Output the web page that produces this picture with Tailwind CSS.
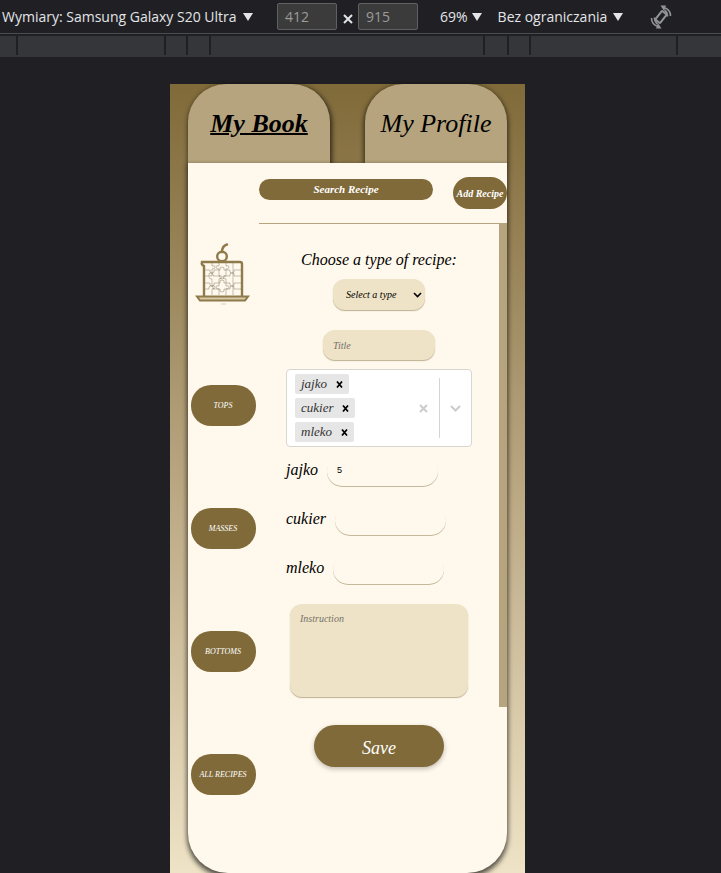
<!DOCTYPE html>
<html lang="pl">
<head>
<meta charset="utf-8">
<meta name="viewport" content="width=device-width, initial-scale=1">
<title>My Book</title>
<script src="https://cdn.jsdelivr.net/npm/@tailwindcss/browser@4"></script>
</head>
<body class="flex min-h-screen flex-col overflow-x-hidden bg-[#202024] font-['Liberation_Serif',serif] text-black">
  <!-- Device toolbar -->
  <header class="font-['Open_Sans',sans-serif] text-sm text-[#e4e5e8]">
    <div class="flex h-[34px] items-center whitespace-nowrap border-b border-[#494c50] pl-[2px]">
      <button class="flex w-[275px] items-center gap-[6px]">Wymiary: Samsung Galaxy S20 Ultra
        <svg class="h-2 w-[10px] fill-current" viewBox="0 0 10 8"><path d="M0 0h10L5 8z"/></svg></button>
      <input aria-label="Szerokość" value="412" class="h-[27px] w-[60px] rounded-xs border border-[#5f6062] bg-[#3b3b3b] px-[7px] text-[#9b9b9b]">
      <span class="flex w-[21px] justify-center pt-1"><svg class="h-[10px] w-[10px]" viewBox="0 0 10 10" fill="none" stroke="currentColor" stroke-width="2"><path d="M1 1l8 8M9 1L1 9"/></svg></span>
      <input aria-label="Wysokość" value="915" class="h-[27px] w-[60px] rounded-xs border border-[#5f6062] bg-[#3b3b3b] px-[7px] text-[#9b9b9b]">
      <button class="ml-[22px] flex items-center gap-1">69%
        <svg class="h-2 w-[10px] fill-current" viewBox="0 0 10 8"><path d="M0 0h10L5 8z"/></svg></button>
      <button class="ml-4 flex items-center gap-[6px]">Bez ograniczania
        <svg class="h-2 w-[10px] fill-current" viewBox="0 0 10 8"><path d="M0 0h10L5 8z"/></svg></button>
      <button aria-label="Obróć" class="ml-[26px]">
        <svg class="h-6 w-6" viewBox="0 0 24 24" fill="none" stroke="#929396" stroke-width="2"><rect x="9" y="6.500" width="6" height="11" rx="1" transform="rotate(38 12 12)"/><path d="M2.500 13c0 4 2.500 7.500 7 8.500M21.500 11c0-4-2.500-7.500-7-8.500M5.500 12.500c0 3 1 5 3 6.500M18.500 11.500c0-3-1-5-3-6.500" stroke-width="1.600"/><path d="M7 23.500h5.500L9 18zM17 0.500h-5.500L15 6z" fill="#929396" stroke="none"/></svg></button>
    </div>
    <div class="relative mt-[2px] h-[21px] bg-[#35363a]">
      <i class="absolute left-[16px] top-0 h-[19px] w-[2px] bg-[#202024]"></i>
      <i class="absolute left-[164px] top-0 h-[19px] w-[2px] bg-[#202024]"></i>
      <i class="absolute left-[186px] top-0 h-[19px] w-[2px] bg-[#202024]"></i>
      <i class="absolute left-[209px] top-0 h-[19px] w-[2px] bg-[#202024]"></i>
      <i class="absolute left-[483px] top-0 h-[19px] w-[2px] bg-[#202024]"></i>
      <i class="absolute left-[507px] top-0 h-[19px] w-[2px] bg-[#202024]"></i>
      <i class="absolute left-[529px] top-0 h-[19px] w-[2px] bg-[#202024]"></i>
      <i class="absolute left-[676px] top-0 h-[19px] w-[2px] bg-[#202024]"></i>
    </div>
  </header>

  <!-- Device viewport -->
  <div class="flex grow justify-center pr-[26px] pt-[27px]">
    <div class="flex w-full max-w-[355px] flex-col bg-linear-to-b from-[#806a39] via-[#b9a681] to-[#eee3c6] px-[18px]">
      <nav class="flex justify-between text-[26px] italic">
        <a href="#book" class="flex h-[79px] w-[142px] items-center justify-center rounded-t-[38px] bg-[#b6a47e] font-bold underline decoration-2 shadow-[1px_2px_5px_1px_rgba(0,0,0,0.65)]">My Book</a>
        <a href="#profile" class="flex h-[79px] w-[142px] items-center justify-center rounded-t-[38px] bg-[#b6a47e] shadow-[0_2px_5px_1px_rgba(0,0,0,0.65)]">My Profile</a>
      </nav>

      <main class="relative flex grow rounded-b-[40px] bg-[#fff8ec] shadow-[0_3px_5px_1px_rgba(0,0,0,0.65)]">
        <aside class="flex w-[71px] shrink-0 flex-col items-center pr-[1px] text-[8px] font-medium italic text-white">
          <svg class="mt-[79px] h-[64px] w-[56px]" viewBox="0 0 56 64" fill="none" stroke="#8f7a4a" stroke-width="2.400" role="img" aria-label="Cake">
            <circle cx="27" cy="14.500" r="4.800"/><path d="M27 10Q27 4 32 2.500" stroke-linecap="round"/>
            <path d="M9 54V24q-3-1-2-4h38q2 0 2 2v32"/><path d="M2 54.500h51l-3 4H5z" fill="#d9cba6" stroke-width="2"/>
            <path d="M26 62h5" stroke="#d9cfb8" stroke-width="1"/>
            <g stroke="#756a52" stroke-width="0.700" stroke-opacity="0.6">
              <path d="M10 28h5q-1 3 2 3t2-3h6q-1-3 2-3t2 3h6q-1 3 2 3t2-3h7M10 34h4q-1-3 2-3t2 3h7q-1 3 2 3t2-3h6q-1-3 2-3t2 3h7M10 41h5q-1 3 2 3t2-3h6q-1-3 2-3t2 3h6q-1 3 2 3t2-3h7M10 47h4q-1-3 2-3t2 3h7q-1 3 2 3t2-3h6q-1-3 2-3t2 3h7"/>
              <path d="M17 21v3q3-1 3 1t-3 2v7q-3-1-3 1t3 2v7q3-1 3 1t-3 2v6M24 21v3q-3-1-3 1t3 2v7q3-1 3 1t-3 2v7q-3-1-3 1t3 2v6M31 21v3q3-1 3 1t-3 2v7q-3-1-3 1t3 2v7q3-1 3 1t-3 2v6M38 21v32"/>
            </g>
          </svg>
          <div class="mt-[79px] flex flex-col gap-[82px]">
            <button class="h-[41px] w-[65px] rounded-[20px] bg-[#806a39]">TOPS</button>
            <button class="h-[41px] w-[65px] rounded-[20px] bg-[#806a39]">MASSES</button>
            <button class="h-[41px] w-[65px] rounded-[20px] bg-[#806a39]">BOTTOMS</button>
            <button class="h-[41px] w-[65px] whitespace-nowrap rounded-[20px] bg-[#806a39]">ALL RECIPES</button>
          </div>
        </aside>

        <section class="min-w-0 grow">
          <div class="flex h-[61px] items-start justify-between border-b border-[#b6a47e] pt-[14px] font-bold italic text-white">
            <button class="mt-[2px] h-[21px] w-[174px] rounded-full bg-[#806a39] text-[11px] leading-none">Search Recipe</button>
            <button class="h-8 w-[54px] whitespace-nowrap rounded-full bg-[#806a39] text-[10px]">Add Recipe</button>
          </div>
          <div class="flex">
            <form class="flex grow flex-col items-center pt-[26px] italic">
              <label for="type" class="text-base leading-5">Choose a type of recipe:</label>
              <div class="relative mt-[9px]">
                <select id="type" class="block h-[31px] w-[92px] appearance-none rounded-xl bg-[#eee3c6] px-[13px] text-[10px] italic shadow-[0_1px_1px_rgba(128,106,57,0.5)]"><option>Select a type</option></select>
                <svg class="pointer-events-none absolute right-[3px] top-[13px] h-[6px] w-[9px]" viewBox="0 0 9 6" fill="none" stroke="#000" stroke-width="1.600"><path d="M1 1l3.500 3.500L8 1"/></svg>
              </div>
              <input aria-label="Title" placeholder="Title" class="mt-5 h-[30px] w-[112px] rounded-xl bg-[#eee3c6] px-[10px] text-[10px] italic shadow-[0_1px_1px_rgba(128,106,57,0.5)] placeholder:text-[#75716a]">

              <div class="mt-[9px] flex w-[186px] items-center rounded border border-[#d9d6d1] bg-white py-1 text-[13px] leading-5 text-[#333]">
                <ul class="flex grow flex-col items-start gap-1 pl-2">
                  <li class="flex items-center rounded-xs bg-[#e6e6e6] pl-[6px]">jajko<button type="button" aria-label="Remove jajko" class="ml-[3px] px-[6px]"><svg class="h-[7px] w-[7px]" viewBox="0 0 7 7" stroke="#000" stroke-width="1.700"><path d="M1 0.500l5 6M6 0.500l-5 6"/></svg></button></li>
                  <li class="flex items-center rounded-xs bg-[#e6e6e6] pl-[6px]">cukier<button type="button" aria-label="Remove cukier" class="ml-[3px] px-[6px]"><svg class="h-[7px] w-[7px]" viewBox="0 0 7 7" stroke="#000" stroke-width="1.700"><path d="M1 0.500l5 6M6 0.500l-5 6"/></svg></button></li>
                  <li class="flex items-center rounded-xs bg-[#e6e6e6] pl-[6px]">mleko<button type="button" aria-label="Remove mleko" class="ml-[3px] px-[6px]"><svg class="h-[7px] w-[7px]" viewBox="0 0 7 7" stroke="#000" stroke-width="1.700"><path d="M1 0.500l5 6M6 0.500l-5 6"/></svg></button></li>
                </ul>
                <button type="button" aria-label="Clear all" class="px-[11px]"><svg class="h-[9px] w-[9px]" viewBox="0 0 9 9" stroke="#ccc" stroke-width="2"><path d="M1 1l7 7M8 1L1 8"/></svg></button>
                <span class="my-1 w-px self-stretch bg-[#d4d4d4]"></span>
                <button type="button" aria-label="Open list" class="px-[10px]"><svg class="h-[7px] w-[11px]" viewBox="0 0 11 7" fill="none" stroke="#ccc" stroke-width="2"><path d="M1 1l4.500 4.500L10 1"/></svg></button>
              </div>

              <div class="flex w-[186px] flex-col gap-[19px] pt-[9px] text-base">
                <div class="flex h-[30px] gap-[9px]"><label for="q1" class="leading-7">jajko</label><input id="q1" value="5" class="w-[111px] rounded-2xl bg-transparent px-[10px] font-['Liberation_Sans',sans-serif] text-[9px] not-italic shadow-[0_1px_0_rgba(128,106,57,0.45)]"></div>
                <div class="flex h-[30px] gap-[9px]"><label for="q2" class="leading-7">cukier</label><input id="q2" class="w-[111px] rounded-2xl bg-transparent px-[10px] shadow-[0_1px_0_rgba(128,106,57,0.45)]"></div>
                <div class="flex h-[30px] gap-[9px]"><label for="q3" class="leading-7">mleko</label><input id="q3" class="w-[111px] rounded-2xl bg-transparent px-[10px] shadow-[0_1px_0_rgba(128,106,57,0.45)]"></div>
              </div>

              <textarea aria-label="Instruction" placeholder="Instruction" class="mt-5 block h-[93px] w-[178px] resize-none rounded-xl bg-[#eee3c6] px-[10px] py-[7px] text-[10px] italic shadow-[0_1px_1px_rgba(128,106,57,0.5)] placeholder:text-[#75716a]"></textarea>
              <button type="button" class="mt-7 h-[42px] w-[130px] rounded-full bg-[#806a39] pt-1 text-lg italic leading-none text-white shadow-[0_2px_5px_rgba(0,0,0,0.25)]">Save</button>
            </form>
            <div class="h-[483px] w-2 shrink-0 bg-[#b6a47e]"></div>
          </div>
        </section>
      </main>
    </div>
  </div>
</body>
</html>
